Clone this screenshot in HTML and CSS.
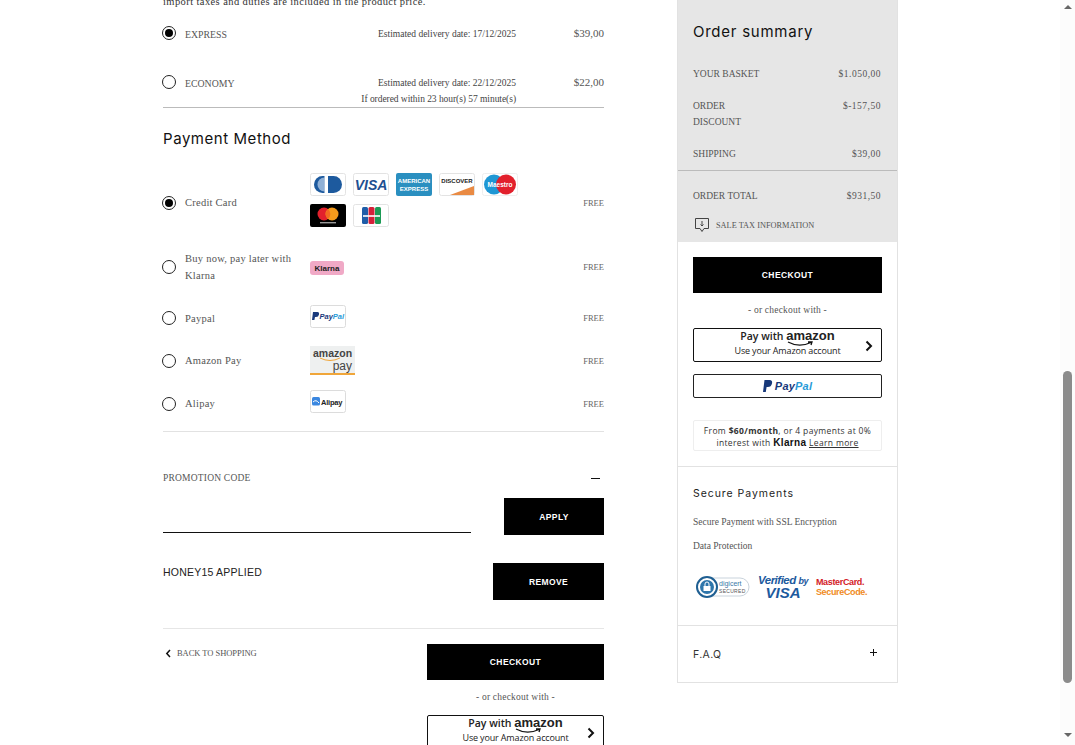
FILE: index.html
```html
<!DOCTYPE html>
<html lang="en">
<head>
    <meta charset="UTF-8">
    <meta name="viewport" content="width=device-width, initial-scale=1.0">
    <title>Checkout</title>
    <link rel="stylesheet" href="styles.css">
</head>
<body>
<div class="page">
    <main class="checkout">
        <p class="tax-note">import taxes and duties are included in the product price.</p>

        <div class="ship-row ship-express">
            <span class="radio checked"></span>
            <span class="ship-name">EXPRESS</span>
            <span class="ship-date">Estimated delivery date: 17/12/2025</span>
            <span class="ship-price">$39,00</span>
        </div>
        <div class="ship-row ship-economy">
            <span class="radio"></span>
            <span class="ship-name">ECONOMY</span>
            <span class="ship-date">Estimated delivery date: 22/12/2025<small>If ordered within 23 hour(s) 57 minute(s)</small></span>
            <span class="ship-price">$22,00</span>
        </div>

        <h2 class="section-title">Payment Method</h2>

        <div class="pay-row pay-card">
            <span class="radio checked"></span>
            <span class="pay-name">Credit Card</span>
            <div class="pay-logos">
                <svg class="card" viewBox="0 0 36 23"><rect x=".5" y=".5" width="35" height="22" rx="2" fill="#fff" stroke="#e3e3e3"/><rect x="4" y="3" width="28" height="17" rx="8.5" fill="#1d5a9e"/><path d="M14.500 4.500 a7 7 0 0 0 0 14 Z" fill="#8fb0d6"/><rect x="14.500" y="3" width="3.500" height="17" fill="#fff"/></svg>
                <svg class="card" viewBox="0 0 36 23"><rect x=".5" y=".5" width="35" height="22" rx="2" fill="#fff" stroke="#e3e3e3"/><text x="18" y="17" class="logo-visa">VISA</text></svg>
                <svg class="card" viewBox="0 0 36 23"><rect width="36" height="23" rx="2" fill="#2a8fc0"/><text x="18" y="10" class="logo-amex">AMERICAN</text><text x="18" y="18" class="logo-amex">EXPRESS</text></svg>
                <svg class="card" viewBox="0 0 36 23"><rect x=".5" y=".5" width="35" height="22" rx="2" fill="#fff" stroke="#e3e3e3"/><path d="M11 22 L35 13 V22 Z" fill="#e98a43"/><text x="18" y="10" class="logo-disc">DISCOVER</text></svg>
                <svg class="card" viewBox="0 0 36 23"><rect x=".5" y=".5" width="35" height="22" rx="2" fill="#fff" stroke="#eee"/><circle cx="12" cy="11.5" r="10" fill="#1f97d4"/><circle cx="24" cy="11.5" r="10" fill="#e2202c"/><text x="18" y="14" class="logo-maestro">Maestro</text></svg>
                <svg class="card" viewBox="0 0 36 23"><rect width="36" height="23" rx="2" fill="#000"/><circle cx="14" cy="10" r="6.5" fill="#e2202c"/><circle cx="22" cy="10" r="6.5" fill="#f49b1c"/><path d="M18 5 a6.5 6.5 0 0 1 0 10 a6.5 6.5 0 0 1 0 -10" fill="#f26a21"/><rect x="10" y="18" width="16" height="1.4" fill="#999"/></svg>
                <svg class="card" viewBox="0 0 36 23"><rect x=".5" y=".5" width="35" height="22" rx="2" fill="#fff" stroke="#e3e3e3"/><rect x="9" y="3" width="6" height="17" rx="1.500" fill="#1f5da8"/><rect x="15.500" y="3" width="6" height="17" rx="1.500" fill="#d5203a"/><rect x="22" y="3" width="6" height="17" rx="1.500" fill="#1c9a55"/><rect x="10" y="11" width="17" height="2" fill="#fff" opacity=".8"/></svg>
            </div>
            <span class="pay-fee">FREE</span>
        </div>

        <div class="pay-row pay-klarna">
            <span class="radio"></span>
            <span class="pay-name">Buy now, pay later with Klarna</span>
            <div class="pay-logos">
                <svg class="klarna-badge" viewBox="0 0 34 14"><rect width="34" height="14" rx="3" fill="#f0a9c6"/><text x="17" y="10" class="logo-klarna">Klarna</text></svg>
            </div>
            <span class="pay-fee">FREE</span>
        </div>

        <div class="pay-row pay-paypal">
            <span class="radio"></span>
            <span class="pay-name">Paypal</span>
            <div class="pay-logos">
                <svg class="card" viewBox="0 0 36 23"><rect x=".5" y=".5" width="35" height="22" rx="2" fill="#fff" stroke="#dcdcdc"/><path d="M3 7 H7.500 Q9.500 7 9 9.500 Q8.500 12 6 12 H5 L4.400 15 H2 Z" fill="#1a3a7c"/><text x="9.500" y="14" class="logo-pp"><tspan fill="#1a3a7c">Pay</tspan><tspan fill="#2a9bd8">Pal</tspan></text></svg>
            </div>
            <span class="pay-fee">FREE</span>
        </div>

        <div class="pay-row pay-amazon">
            <span class="radio"></span>
            <span class="pay-name">Amazon Pay</span>
            <div class="pay-logos">
                <svg class="amazon-tile" viewBox="0 0 45 29"><rect width="45" height="29" fill="#eef0f0"/><rect y="27" width="45" height="2" fill="#f0a63a"/><text x="22.500" y="10.500" class="logo-az">amazon</text><path d="M10 12 Q20 17 30 12" fill="none" stroke="#f0a63a" stroke-width="1"/><text x="42" y="24" class="logo-azpay">pay</text></svg>
            </div>
            <span class="pay-fee">FREE</span>
        </div>

        <div class="pay-row pay-alipay">
            <span class="radio"></span>
            <span class="pay-name">Alipay</span>
            <div class="pay-logos">
                <svg class="card" viewBox="0 0 36 23"><rect x=".5" y=".5" width="35" height="22" rx="2" fill="#fff" stroke="#dcdcdc"/><rect x="2" y="7" width="8" height="8.500" rx="1.500" fill="#3a87e0"/><path d="M3 12 Q6 9 9 13" fill="none" stroke="#fff"/><text x="11" y="14.500" class="logo-ali">Alipay</text></svg>
            </div>
            <span class="pay-fee">FREE</span>
        </div>

        <div class="promo-head">
            <span>PROMOTION CODE</span>
            <i class="minus"></i>
        </div>
        <div class="promo-form">
            <input class="promo-input" type="text" aria-label="Promotion code">
            <button class="btn btn-apply">APPLY</button>
        </div>
        <div class="promo-applied">
            <span class="promo-code">HONEY15 APPLIED</span>
            <button class="btn btn-remove">REMOVE</button>
        </div>

        <div class="checkout-foot">
            <a class="back-link" href="#">
                <svg width="7" height="9" viewBox="0 0 7 9"><path d="M5 1 L1.800 4.500 L5 8" fill="none" stroke="#111" stroke-width="1.500"/></svg>
                BACK TO SHOPPING
            </a>
            <div class="foot-actions">
                <button class="btn btn-foot">CHECKOUT</button>
                <p class="or-with">- or checkout with -</p>
                <div class="amazon-btn amazon-foot">
                    <div class="amazon-copy">
                        <span class="amazon-line">Pay with <b>amazon</b></span>
                        <svg class="smile" width="30" height="6" viewBox="0 0 30 6"><path d="M2 1 Q13 7 25 1.500 M22 1 L26 1 L25 4" fill="none" stroke="#111" stroke-width="1.300"/></svg>
                        <span class="amazon-sub">Use your Amazon account</span>
                    </div>
                    <svg class="chev" width="8" height="12" viewBox="0 0 8 12"><path d="M1.500 1.500 L6 6 L1.500 10.500" fill="none" stroke="#111" stroke-width="2"/></svg>
                </div>
            </div>
        </div>
    </main>

    <aside class="summary">
        <div class="summary-top">
            <h2 class="section-title summary-title">Order summary</h2>
            <div class="sum-row sum-basket"><span>YOUR BASKET</span><b>$1.050,00</b></div>
            <div class="sum-row sum-discount"><span>ORDER<br>DISCOUNT</span><b>$-157,50</b></div>
            <div class="sum-row sum-shipping"><span>SHIPPING</span><b>$39,00</b></div>
            <div class="sum-row sum-total"><span>ORDER TOTAL</span><b>$931,50</b></div>
            <div class="sale-tax">
                <svg width="16" height="16" viewBox="0 0 16 16"><path d="M1.500 1.500 H14.500 V11.500 H10 L8 14.500 L6 11.500 H1.500 Z" fill="none" stroke="#444"/><path d="M8 4 V9 M6.500 7.500 L8 9 L9.500 7.500" fill="none" stroke="#444"/></svg>
                <span>SALE TAX INFORMATION</span>
            </div>
        </div>

        <div class="summary-actions">
            <button class="btn btn-side">CHECKOUT</button>
            <p class="or-with">- or checkout with -</p>
            <div class="amazon-btn">
                <div class="amazon-copy">
                    <span class="amazon-line">Pay with <b>amazon</b></span>
                    <svg class="smile" width="30" height="6" viewBox="0 0 30 6"><path d="M2 1 Q13 7 25 1.500 M22 1 L26 1 L25 4" fill="none" stroke="#111" stroke-width="1.300"/></svg>
                    <span class="amazon-sub">Use your Amazon account</span>
                </div>
                <svg class="chev" width="8" height="12" viewBox="0 0 8 12"><path d="M1.500 1.500 L6 6 L1.500 10.500" fill="none" stroke="#111" stroke-width="2"/></svg>
            </div>
            <div class="paypal-btn">
                <svg width="10" height="12" viewBox="0 0 10 12"><path d="M1.500 0 H6.500 Q9.800 0 9 3.500 Q8.200 7 4.800 7 H3.600 L2.800 12 H0 Z" fill="#17387a"/></svg>
                <span class="pp-word"><span class="pp-pay">Pay</span><span class="pp-pal">Pal</span></span>
            </div>
            <div class="klarna-note">
                From <b>$60/month</b>, or 4 payments at 0% interest with <b class="klarna-word">Klarna</b> <u>Learn more</u>
            </div>
        </div>

        <div class="secure">
            <h3 class="secure-title">Secure Payments</h3>
            <p>Secure Payment with SSL Encryption</p>
            <p>Data Protection</p>
            <div class="secure-logos">
                <svg width="54" height="22" viewBox="0 0 54 22"><rect x="6" y="2" width="47" height="18" rx="9" fill="#fff" stroke="#c9d3dc"/><circle cx="11" cy="11" r="10" fill="#fff" stroke="#1f5f92" stroke-width="2"/><circle cx="11" cy="11" r="7" fill="#2f76ab"/><rect x="7.500" y="10" width="7" height="5" fill="#fff"/><path d="M9 10 V8 a2 2 0 0 1 4 0 V10" fill="none" stroke="#fff"/><text x="23" y="10" class="dc-top">digicert</text><text x="23" y="16.500" class="dc-sub">SECURED</text></svg>
                <div class="vbv"><span>Verified <i>by</i></span><b>VISA</b></div>
                <div class="msc"><b>MasterCard.</b><span>SecureCode.</span></div>
            </div>
        </div>

        <div class="faq">
            <span>F.A.Q</span>
            <i class="plus"></i>
        </div>
    </aside>
</div>

<div class="scrollbar">
    <i class="arrow-up"></i>
    <i class="thumb"></i>
    <i class="arrow-down"></i>
</div>
</body>
</html>
```

FILE: styles.css
```css
html, body {
    margin: 0;
    height: 745px;
    overflow: hidden;
    background-color: #fff;
}
body {
    display: flex;
    font-family: "Liberation Serif", serif;
    color: #444;
}
p, h2, h3 {
    margin: 0;
    font-weight: normal;
}
.page {
    flex: 1;
    display: flex;
    align-items: flex-start;
    gap: 73px;
    padding-left: 163px;
    height: 745px;
    overflow: hidden;
}

/* left column */
.checkout {
    width: 441px;
    flex: none;
}
.tax-note {
    height: 28px;
    margin-top: -8px;
    font-size: 10.500px;
    line-height: 20px;
    letter-spacing: .41px;
    color: #333;
}
.radio {
    display: block;
    width: 12px;
    height: 12px;
    margin-left: -1px;
    border: 1px solid #222;
    border-radius: 50%;
    background-color: #fff;
    position: relative;
}
.radio.checked::after {
    content: "";
    position: absolute;
    left: 2px;
    top: 2px;
    width: 8px;
    height: 8px;
    border-radius: 50%;
    background-color: #000;
}
.ship-row {
    display: grid;
    grid-template-columns: 22px 100px 231px 88px;
    font-size: 10px;
    align-items: start;
}
.ship-express {
    height: 49px;
    padding-top: 6px;
    box-sizing: border-box;
}
.ship-economy {
    height: 39px;
    padding-top: 6px;
    box-sizing: border-box;
    border-bottom: 1px solid #bbb;
}
.ship-name {
    padding-top: 3px;
    line-height: 12px;
    letter-spacing: 0;
    font-size: 9.800px;
    color: #555;
}
.ship-date {
    text-align: right;
    line-height: 16px;
    font-size: 9.500px;
    color: #444;
}
.ship-date small {
    display: block;
    font-size: 9.500px;
    letter-spacing: -.05px;
}
.ship-price {
    text-align: right;
    line-height: 14px;
    font-size: 11px;
    color: #555;
}
.section-title {
    font-family: Inter, "Open Sans", sans-serif;
    font-size: 15px;
    line-height: 20px;
    letter-spacing: .55px;
    color: #111;
    margin: 21px 0 24px;
}
.pay-row {
    display: grid;
    grid-template-columns: 22px 125px 208px 86px;
    align-items: center;
    box-sizing: border-box;
}
.pay-card { height: 59px; }
.pay-klarna { height: 70px; }
.pay-paypal { height: 32px; }
.pay-amazon { height: 53px; }
.pay-alipay {
    height: 45px;
    padding-bottom: 11px;
    border-bottom: 1px solid #e2e2e2;
}
.pay-name {
    font-size: 10.500px;
    line-height: 17px;
    letter-spacing: .25px;
    color: #555;
    padding-right: 10px;
}
.pay-logos {
    display: flex;
    flex-wrap: wrap;
    gap: 8px 7px;
}
.pay-fee {
    text-align: right;
    font-size: 8.500px;
    color: #666;
}
.card {
    display: block;
    width: 36px;
    height: 23px;
}
.pay-card .pay-logos {
    margin-top: -5px;
}
.pay-klarna .pay-logos {
    margin-top: 2px;
}
.pay-paypal .pay-logos {
    margin-top: -4px;
}
.pay-alipay .pay-logos {
    margin-top: -4px;
}
.klarna-badge {
    display: block;
    width: 34px;
    height: 14px;
}
.amazon-tile {
    display: block;
    width: 45px;
    height: 29px;
}

/* svg logo words */
.logo-visa { font: italic bold 14px "Liberation Sans", sans-serif; fill: #1d4f91; text-anchor: middle; }
.logo-amex { font: bold 6px "Liberation Sans", sans-serif; fill: #fff; text-anchor: middle; }
.logo-disc { font: bold 6px "Liberation Sans", sans-serif; fill: #222; text-anchor: middle; }
.logo-maestro { font: bold 6.500px "Liberation Sans", sans-serif; fill: #fff; text-anchor: middle; }
.logo-klarna { font: bold 8px "Liberation Sans", sans-serif; fill: #222; text-anchor: middle; }
.logo-pp { font: italic bold 7.500px "Liberation Sans", sans-serif; }
.logo-ali { font: bold 7.500px "Liberation Sans", sans-serif; fill: #222; letter-spacing: -.2px; }
.logo-az { font: bold 10.500px "Liberation Sans", sans-serif; fill: #444; text-anchor: middle; }
.logo-azpay { font: 12px "Liberation Sans", sans-serif; fill: #444; text-anchor: end; }
.dc-top { font: 7px "Liberation Sans", sans-serif; fill: #3d7aa8; }
.dc-sub { font: 5px "Liberation Sans", sans-serif; fill: #555; letter-spacing: .3px; }

/* promo */
.promo-head {
    display: flex;
    justify-content: space-between;
    align-items: center;
    height: 14px;
    margin-top: 39px;
    font-size: 9.500px;
    letter-spacing: .2px;
    color: #555;
}
.minus {
    display: block;
    width: 9px;
    height: 1px;
    margin-right: 4px;
    background-color: #111;
}
.promo-form {
    display: flex;
    justify-content: space-between;
    align-items: flex-end;
    margin-top: 13px;
}
.promo-input {
    width: 308px;
    height: 24px;
    box-sizing: border-box;
    padding: 0;
    margin-bottom: 2px;
    border: none;
    border-bottom: 1px solid #111;
    outline: none;
}
.btn {
    display: block;
    border: none;
    padding: 0;
    background-color: #000;
    color: #fff;
    font-family: "Liberation Sans", sans-serif;
    font-weight: bold;
    font-size: 8.500px;
    letter-spacing: .4px;
}
.btn-apply { width: 100px; height: 37px; }
.btn-remove { width: 111px; height: 37px; }
.btn-foot { width: 177px; height: 36px; }
.btn-side { width: 189px; height: 36px; }
.promo-applied {
    display: flex;
    justify-content: space-between;
    align-items: flex-start;
    height: 65px;
    margin-top: 28px;
    border-bottom: 1px solid #e6e6e6;
}
.promo-code {
    font-family: "Liberation Sans", sans-serif;
    font-size: 10.500px;
    letter-spacing: .22px;
    line-height: 18px;
    color: #222;
}
.checkout-foot {
    display: flex;
    justify-content: space-between;
    align-items: flex-start;
    margin-top: 15px;
}
.back-link {
    display: flex;
    align-items: center;
    gap: 5px;
    margin: 3px 0 0 2px;
    font-size: 8.500px;
    letter-spacing: -.05px;
    line-height: 12px;
    color: #555;
    text-decoration: none;
}
.foot-actions {
    width: 177px;
}
.or-with {
    text-align: center;
    font-size: 9.500px;
    letter-spacing: .2px;
    line-height: 12px;
    color: #555;
    margin: 11px 0 12px;
}

/* pay buttons */
.amazon-btn {
    position: relative;
    height: 34px;
    box-sizing: border-box;
    border: 1px solid #111;
    border-radius: 2px;
    background-color: #fff;
    display: flex;
    justify-content: center;
    font-family: "Open Sans", "Liberation Sans", sans-serif;
    color: #222;
}
.amazon-foot {
    height: 40px;
}
.amazon-copy {
    display: flex;
    flex-direction: column;
    align-items: center;
}
.amazon-line {
    font-size: 10.500px;
    font-weight: 600;
    line-height: 14px;
    height: 12px;
}
.amazon-line b {
    font-size: 13px;
    font-family: "Liberation Sans", sans-serif;
}
.smile {
    display: block;
    margin: 0 0 -2px 26px;
}
.amazon-sub {
    font-size: 9px;
    font-weight: 500;
    line-height: 12px;
    letter-spacing: -.15px;
}
.chev {
    position: absolute;
    right: 8px;
    top: 11px;
}
.paypal-btn {
    display: flex;
    align-items: center;
    justify-content: center;
    gap: 2px;
    height: 24px;
    box-sizing: border-box;
    margin-top: 12px;
    border: 1px solid #222;
    border-radius: 2px;
}
.pp-word {
    font: italic bold 11px "Liberation Sans", sans-serif;
    letter-spacing: .2px;
}
.pp-pay { color: #17387a; }
.pp-pal { color: #2a9bd8; }
.klarna-note {
    height: 31px;
    box-sizing: border-box;
    margin-top: 22px;
    padding: 4px 4px 0;
    border: 1px solid #eee;
    border-radius: 2px;
    text-align: center;
    font-family: "Open Sans", sans-serif;
    font-size: 8.500px;
    line-height: 12px;
    letter-spacing: .35px;
    color: #333;
}
.klarna-word {
    font-family: "Liberation Sans", sans-serif;
    font-size: 10px;
    line-height: 10px;
    color: #111;
}

/* right column */
.summary {
    width: 221px;
    height: 683px;
    flex: none;
    box-sizing: border-box;
    border: 1px solid #e2e2e2;
    border-top: none;
}
.summary-top {
    height: 242px;
    background-color: #e6e6e6;
    padding-top: 22px;
    box-sizing: border-box;
}
.summary-title {
    margin: 0 0 24px 15px;
    letter-spacing: .75px;
}
.sum-row {
    display: flex;
    justify-content: space-between;
    padding: 0 16px 0 15px;
    font-size: 9.500px;
    line-height: 16px;
    color: #555;
}
.sum-row b {
    font-weight: normal;
    letter-spacing: .5px;
}
.sum-discount {
    margin-top: 16px;
}
.sum-shipping {
    margin-top: 16px;
    height: 24px;
    border-bottom: 1px solid #bbb;
}
.sum-total {
    margin-top: 17px;
}
.sale-tax {
    display: flex;
    align-items: center;
    gap: 6px;
    margin: 13px 0 0 16px;
    font-size: 8.300px;
    color: #555;
}
.summary-actions {
    height: 225px;
    box-sizing: border-box;
    padding: 15px 15px 0;
    border-bottom: 1px solid #e2e2e2;
}
.secure {
    height: 159px;
    box-sizing: border-box;
    padding: 19px 15px 0;
    border-bottom: 1px solid #e2e2e2;
}
.secure-title {
    font-family: Inter, "Open Sans", sans-serif;
    font-size: 10.500px;
    line-height: 16px;
    letter-spacing: .95px;
    color: #222;
}
.secure p {
    margin-top: 8px;
    font-size: 9.500px;
    line-height: 16px;
    color: #555;
}
.secure-title + p {
    margin-top: 12px;
}
.secure-logos {
    display: flex;
    align-items: center;
    gap: 8px;
    margin: 20px 0 0 3px;
}
.vbv {
    display: flex;
    flex-direction: column;
    align-items: center;
    font-family: "Liberation Sans", sans-serif;
    color: #1d5a9e;
    line-height: 12px;
}
.vbv span {
    font-size: 11.500px;
    font-style: italic;
    font-weight: bold;
    letter-spacing: -.5px;
}
.vbv i {
    font-size: 9px;
}
.vbv b {
    font-size: 15px;
    font-style: italic;
}
.msc {
    display: flex;
    flex-direction: column;
    font-family: "Liberation Sans", sans-serif;
    font-size: 9px;
    line-height: 10px;
    letter-spacing: -.35px;
    font-weight: bold;
}
.msc b { color: #d32027; }
.msc span { color: #f08a24; }
.faq {
    display: flex;
    justify-content: space-between;
    align-items: flex-start;
    padding: 21px 20px 0 15px;
    font-family: Inter, "Open Sans", sans-serif;
    font-size: 10.500px;
    line-height: 16px;
    letter-spacing: .35px;
    color: #333;
}
.plus {
    position: relative;
    display: block;
    width: 7px;
    height: 7px;
    margin-top: 2px;
}
.plus::before, .plus::after {
    content: "";
    position: absolute;
    background-color: #111;
}
.plus::before { left: 0; right: 0; top: 3px; height: 1px; }
.plus::after { top: 0; bottom: 0; left: 3px; width: 1px; }

/* scrollbar */
.scrollbar {
    width: 15px;
    height: 745px;
    flex: none;
    display: flex;
    flex-direction: column;
    align-items: center;
    background-color: #fcfcfc;
}
.arrow-up, .arrow-down {
    display: block;
    width: 0;
    height: 0;
    border-left: 4px solid transparent;
    border-right: 4px solid transparent;
}
.arrow-up {
    margin-top: 5px;
    border-bottom: 4px solid #666;
}
.arrow-down {
    margin-top: 50px;
    border-top: 4px solid #666;
}
.thumb {
    display: block;
    width: 9px;
    height: 312px;
    margin-top: 362px;
    border-radius: 5px;
    background-color: #8b8b8b;
}
```
